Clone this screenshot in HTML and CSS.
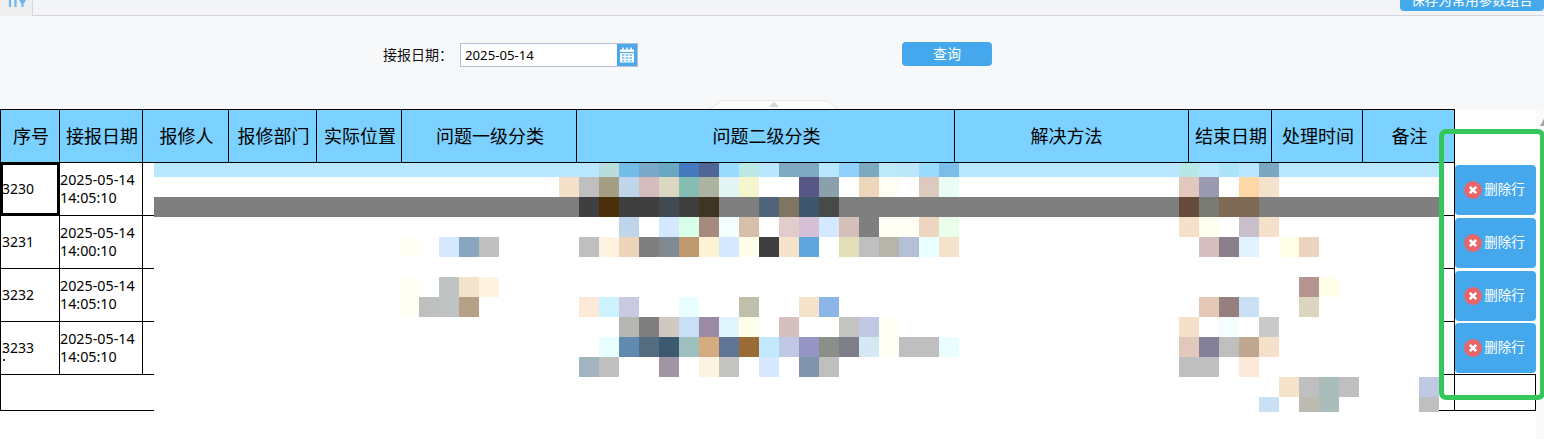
FILE: index.html
```html
<!DOCTYPE html>
<html lang="zh-CN">
<head>
<meta charset="utf-8">
<title>报修记录</title>
<link rel="stylesheet" href="styles.css">
</head>
<body>
<header class="topbar">
  <div class="tab">
    <svg class="tab-icon" width="20" height="8" viewBox="0 0 20 8"><path d="M2 0v7M7.500 0v7M14.500 3v4" stroke="#6db8ef" stroke-width="2.200" fill="none"/><path d="M11 0h7l-2 3.500h-3z" fill="#6db8ef"/></svg>
  </div>
  <div class="tab-rest"><button class="btn save-btn">保存为常用参数组合</button></div>
</header>

<section class="filter">
  <label class="filter-label">接报日期：</label>
  <div class="date-field">
    <input class="date-input" value="2025-05-14" readonly>
    <span class="date-icon">
      <svg width="18" height="18" viewBox="0 0 18 18"><path d="M2 3.500h14v13H2z" fill="#fff" opacity=".95"/><path d="M2 6.500h14" stroke="#4da8ea"/><path d="M5 1.500v3M9 1.500v3M13 1.500v3" stroke="#fff" stroke-width="1.500"/><path d="M4 8h2.500v2H4zM7.800 8h2.500v2H7.800zM11.500 8H14v2h-2.500zM4 11h2.500v2H4zM7.800 11h2.500v2H7.800zM11.500 11H14v2h-2.500zM4 14h2.500v1.500H4zM7.800 14h2.500v1.500H7.800zM11.500 14H14v1.500h-2.500z" fill="#8fc8f0"/></svg>
    </span>
  </div>
  <button class="btn query-btn">查询</button>
  <svg class="collapse-handle" width="128" height="9" viewBox="0 0 128 9"><path d="M0 9 L12 .5 H116 L128 9" fill="#fdfdfd" stroke="#e6e6e6"/><path d="M59 7 L64 1.500 L69 7z" fill="#d9d9d9"/></svg>
</section>

<main class="content">
  <div class="table-area">
    <table class="grid">
      <colgroup>
        <col class="c1"><col class="c2"><col class="c3"><col class="c4"><col class="c5"><col class="c6"><col class="c7"><col class="c8"><col class="c9"><col class="c10"><col class="c11"><col class="c12"><col class="c13">
      </colgroup>
      <thead>
        <tr>
          <th>序号</th><th>接报日期</th><th>报修人</th><th>报修部门</th><th>实际位置</th><th>问题一级分类</th><th>问题二级分类</th><th class="method">解决方法</th><th>结束日期</th><th>处理时间</th><th>备注</th><th></th><th class="action-head"></th>
        </tr>
      </thead>
      <tbody>
        <tr>
          <td class="seq selected">3230</td><td class="date">2025-05-14<br>14:05:10</td><td></td><td></td><td></td><td></td><td></td><td></td><td></td><td></td><td></td><td></td>
          <td class="action"><button class="btn del-btn"><svg class="del-icon" width="18" height="18" viewBox="0 0 18 18"><circle cx="9" cy="9" r="9" fill="#e6666c"/><path d="M5.800 5.800l6.400 6.400M12.200 5.800l-6.400 6.400" stroke="#fff" stroke-width="2.600"/></svg>删除行</button></td>
        </tr>
        <tr>
          <td class="seq">3231</td><td class="date">2025-05-14<br>14:00:10</td><td></td><td></td><td></td><td></td><td></td><td></td><td></td><td></td><td></td><td></td>
          <td class="action"><button class="btn del-btn"><svg class="del-icon" width="18" height="18" viewBox="0 0 18 18"><circle cx="9" cy="9" r="9" fill="#e6666c"/><path d="M5.800 5.800l6.400 6.400M12.200 5.800l-6.400 6.400" stroke="#fff" stroke-width="2.600"/></svg>删除行</button></td>
        </tr>
        <tr>
          <td class="seq">3232</td><td class="date">2025-05-14<br>14:05:10</td><td></td><td></td><td></td><td></td><td></td><td></td><td></td><td></td><td></td><td></td>
          <td class="action"><button class="btn del-btn"><svg class="del-icon" width="18" height="18" viewBox="0 0 18 18"><circle cx="9" cy="9" r="9" fill="#e6666c"/><path d="M5.800 5.800l6.400 6.400M12.200 5.800l-6.400 6.400" stroke="#fff" stroke-width="2.600"/></svg>删除行</button></td>
        </tr>
        <tr>
          <td class="seq marked">3233</td><td class="date">2025-05-14<br>14:05:10</td><td></td><td></td><td></td><td></td><td></td><td></td><td></td><td></td><td></td><td></td>
          <td class="action"><button class="btn del-btn"><svg class="del-icon" width="18" height="18" viewBox="0 0 18 18"><circle cx="9" cy="9" r="9" fill="#e6666c"/><path d="M5.800 5.800l6.400 6.400M12.200 5.800l-6.400 6.400" stroke="#fff" stroke-width="2.600"/></svg>删除行</button></td>
        </tr>
        <tr class="blank-row">
          <td colspan="12"></td><td class="blank-end"></td>
        </tr>
      </tbody>
    </table>

    <svg class="mosaic" width="1285" height="249" viewBox="154 163 1285 249" shape-rendering="crispEdges">
      <rect class="fill" x="154" y="163" fill="#fff"/>
      <rect class="band band-top" x="154" y="163" fill="#b9e7ff"/>
      <rect class="band" x="154" y="197" fill="#7f7f7f"/>
      <g class="short">
        <rect x="599" y="163" fill="#b8dcdc"/><rect x="619" y="163" fill="#73bce8"/><rect x="639" y="163" fill="#7ba7c9"/><rect x="659" y="163" fill="#68a8c0"/><rect x="679" y="163" fill="#4479bf"/><rect x="699" y="163" fill="#4f6593"/><rect x="719" y="163" fill="#98dbfd"/><rect x="739" y="163" fill="#bbe8e3"/><rect x="779" y="163" fill="#7fa9c0"/><rect x="799" y="163" fill="#7fa9c0"/><rect x="839" y="163" fill="#90d0fc"/><rect x="859" y="163" fill="#7ca8c0"/><rect x="879" y="163" fill="#bce8f8"/><rect x="899" y="163" fill="#bce6fa"/><rect x="919" y="163" fill="#98dbfd"/><rect x="939" y="163" fill="#7bbce8"/><rect x="1179" y="163" fill="#b9e6e6"/><rect x="1199" y="163" fill="#bce8ff"/><rect x="1219" y="163" fill="#abe3fb"/><rect x="1259" y="163" fill="#7ba8c0"/>
      </g>
      <g>
        <rect x="559" y="177" fill="#f5e1ca"/><rect x="579" y="177" fill="#bfbfbf"/><rect x="599" y="177" fill="#a59e85"/><rect x="619" y="177" fill="#bfd5ea"/><rect x="639" y="177" fill="#d4bcbc"/><rect x="659" y="177" fill="#dcd7c0"/><rect x="679" y="177" fill="#85bdb3"/><rect x="699" y="177" fill="#adb3a0"/><rect x="719" y="177" fill="#e3f5f3"/><rect x="739" y="177" fill="#f5f6cf"/><rect x="799" y="177" fill="#575785"/><rect x="819" y="177" fill="#8aa0ac"/><rect x="859" y="177" fill="#edd6b9"/><rect x="879" y="177" fill="#fffef5"/><rect x="919" y="177" fill="#ddc9be"/><rect x="939" y="177" fill="#eafdf5"/><rect x="1179" y="177" fill="#e2c8bc"/><rect x="1199" y="177" fill="#9a9ab2"/><rect x="1239" y="177" fill="#ffd6a5"/><rect x="1259" y="177" fill="#f5e2cc"/>
      </g>
      <g>
        <rect x="579" y="197" fill="#3f3f3f"/><rect x="599" y="197" fill="#4d2f0b"/><rect x="619" y="197" fill="#3f3f3f"/><rect x="639" y="197" fill="#3f3f3f"/><rect x="659" y="197" fill="#3f4a52"/><rect x="679" y="197" fill="#3f3f3f"/><rect x="699" y="197" fill="#3f3522"/><rect x="759" y="197" fill="#4f6579"/><rect x="779" y="197" fill="#7f7560"/><rect x="799" y="197" fill="#3f556b"/><rect x="819" y="197" fill="#474a48"/><rect x="1179" y="197" fill="#664b3d"/><rect x="1199" y="197" fill="#7a7b75"/><rect x="1219" y="197" fill="#7f6a55"/><rect x="1239" y="197" fill="#7f6a55"/>
      </g>
      <g>
        <rect x="619" y="217" fill="#bfd5ea"/><rect x="659" y="217" fill="#d4e9ff"/><rect x="679" y="217" fill="#d9ffe9"/><rect x="699" y="217" fill="#a58a7d"/><rect x="719" y="217" fill="#f3feff"/><rect x="739" y="217" fill="#d7bfac"/><rect x="779" y="217" fill="#e1cbcb"/><rect x="799" y="217" fill="#d5c0d5"/><rect x="819" y="217" fill="#d4e9ff"/><rect x="839" y="217" fill="#d5bfb9"/><rect x="859" y="217" fill="#7f7f7f"/><rect x="879" y="217" fill="#fffff5"/><rect x="899" y="217" fill="#fffff5"/><rect x="919" y="217" fill="#edd5bf"/><rect x="939" y="217" fill="#e9ffe9"/><rect x="1179" y="217" fill="#f5e1ca"/><rect x="1199" y="217" fill="#fffff0"/><rect x="1239" y="217" fill="#c9bfca"/><rect x="1259" y="217" fill="#f5e1ca"/>
      </g>
      <g>
        <rect x="399" y="237" fill="#fffff3"/><rect x="439" y="237" fill="#d4e9ff"/><rect x="459" y="237" fill="#8aa5bf"/><rect x="479" y="237" fill="#bfbfbf"/><rect x="579" y="237" fill="#bfbfbf"/><rect x="599" y="237" fill="#fdf3e0"/><rect x="619" y="237" fill="#ecd5b8"/><rect x="639" y="237" fill="#7f7f7f"/><rect x="659" y="237" fill="#7f8a92"/><rect x="679" y="237" fill="#bf9a70"/><rect x="699" y="237" fill="#fff3d5"/><rect x="719" y="237" fill="#d4e9ff"/><rect x="739" y="237" fill="#ffffe9"/><rect x="759" y="237" fill="#3f3f3f"/><rect x="779" y="237" fill="#f5e2cb"/><rect x="799" y="237" fill="#60a5dc"/><rect x="839" y="237" fill="#e3e0b8"/><rect x="859" y="237" fill="#bfbfbf"/><rect x="879" y="237" fill="#b5b5aa"/><rect x="899" y="237" fill="#b5bfd5"/><rect x="919" y="237" fill="#eaffff"/><rect x="939" y="237" fill="#f5e2cb"/><rect x="1199" y="237" fill="#d5bfbf"/><rect x="1219" y="237" fill="#8a7f8a"/><rect x="1239" y="237" fill="#e0f3ff"/><rect x="1279" y="237" fill="#ffffe9"/><rect x="1299" y="237" fill="#ecd5bf"/>
      </g>
      <g>
        <rect x="399" y="277" fill="#fffff3"/><rect x="439" y="277" fill="#bfc3c3"/><rect x="459" y="277" fill="#f5e2cb"/><rect x="479" y="277" fill="#fdf3e0"/><rect x="1299" y="277" fill="#b59590"/><rect x="1319" y="277" fill="#ffffe9"/>
      </g>
      <g>
        <rect x="399" y="297" fill="#fffff3"/><rect x="419" y="297" fill="#bfbfbf"/><rect x="439" y="297" fill="#bfc3c3"/><rect x="459" y="297" fill="#b59f85"/><rect x="579" y="297" fill="#fde9d7"/><rect x="599" y="297" fill="#cdf3ff"/><rect x="619" y="297" fill="#c9c9e3"/><rect x="679" y="297" fill="#e9ffff"/><rect x="739" y="297" fill="#bfbfaa"/><rect x="799" y="297" fill="#f5e2cb"/><rect x="819" y="297" fill="#8ab5e6"/><rect x="1199" y="297" fill="#e2c8b5"/><rect x="1219" y="297" fill="#957f7f"/><rect x="1239" y="297" fill="#c9e0f5"/><rect x="1299" y="297" fill="#dcd5bf"/>
      </g>
      <g>
        <rect x="619" y="317" fill="#b5b7b3"/><rect x="639" y="317" fill="#7f7f7f"/><rect x="659" y="317" fill="#cfc9bf"/><rect x="679" y="317" fill="#c9dff5"/><rect x="699" y="317" fill="#9a8aa5"/><rect x="719" y="317" fill="#e0f5ff"/><rect x="739" y="317" fill="#ffffe9"/><rect x="779" y="317" fill="#d5bfbf"/><rect x="839" y="317" fill="#c3c3bf"/><rect x="859" y="317" fill="#bfc9e3"/><rect x="879" y="317" fill="#fffff5"/><rect x="1179" y="317" fill="#f5e1ca"/><rect x="1219" y="317" fill="#f3ffff"/><rect x="1259" y="317" fill="#c9c9c9"/>
      </g>
      <g>
        <rect x="599" y="337" fill="#e9ffff"/><rect x="619" y="337" fill="#608aaf"/><rect x="639" y="337" fill="#556b80"/><rect x="659" y="337" fill="#3b5a70"/><rect x="679" y="337" fill="#a0bfbf"/><rect x="699" y="337" fill="#d5ab80"/><rect x="719" y="337" fill="#607595"/><rect x="739" y="337" fill="#9a6b35"/><rect x="759" y="337" fill="#c3e9ff"/><rect x="779" y="337" fill="#bfc9e3"/><rect x="799" y="337" fill="#9595c3"/><rect x="819" y="337" fill="#8a8f8a"/><rect x="839" y="337" fill="#7f7f8a"/><rect x="859" y="337" fill="#d5e9f5"/><rect x="879" y="337" fill="#fffff5"/><rect x="899" y="337" fill="#bfbfbf"/><rect x="919" y="337" fill="#bfbfbf"/><rect x="939" y="337" fill="#e9ffff"/><rect x="1179" y="337" fill="#e2c8bc"/><rect x="1199" y="337" fill="#85809a"/><rect x="1219" y="337" fill="#bfbfbf"/><rect x="1239" y="337" fill="#bfa88f"/><rect x="1259" y="337" fill="#f5e1ca"/>
      </g>
      <g>
        <rect x="579" y="357" fill="#a0b5bf"/><rect x="599" y="357" fill="#bfbfbf"/><rect x="659" y="357" fill="#a095a5"/><rect x="699" y="357" fill="#fdf3e0"/><rect x="719" y="357" fill="#c3c3bf"/><rect x="759" y="357" fill="#d4e9ff"/><rect x="799" y="357" fill="#8095ab"/><rect x="819" y="357" fill="#bfbfbf"/><rect x="1179" y="357" fill="#bfbfbf"/><rect x="1199" y="357" fill="#bfbfbf"/><rect x="1239" y="357" fill="#fde9d7"/>
      </g>
      <g>
        <rect x="1279" y="377" fill="#f5e2cb"/><rect x="1299" y="377" fill="#bfbfbf"/><rect x="1319" y="377" fill="#a9bdbb"/><rect x="1339" y="377" fill="#bfbfbf"/><rect x="1419" y="377" fill="#bfc9e3"/>
      </g>
      <g class="last">
        <rect x="1259" y="397" fill="#c9e0f5"/><rect x="1299" y="397" fill="#bdbbb0"/><rect x="1319" y="397" fill="#a9bdbb"/><rect x="1419" y="397" fill="#bfbfbf"/>
      </g>
    </svg>
  </div>
  <aside class="scrollbar">
    <svg width="8" height="8" viewBox="0 0 8 8"><path d="M8 0.500V8H4z" fill="#a8a8a8"/></svg>
  </aside>
  <div class="highlight"></div>
</main>
</body>
</html>
```
FILE: styles.css
```css
* { box-sizing: border-box; }

html, body {
  margin: 0;
  height: 100%;
  overflow: hidden;
}

body {
  background: #f7f8fa;
  color: #000;
  font-family: "Noto Sans", "Noto Sans CJK SC", sans-serif;
  font-size: 14px;
}

.btn {
  border: 0;
  border-radius: 4px;
  background: #46a8ec;
  color: #fff;
  font: inherit;
  padding: 0;
}

.topbar {
  display: flex;
  height: 16px;
  overflow: hidden;
}

.tab {
  width: 33px;
  background: #efefef;
  position: relative;
  overflow: hidden;
  padding-left: 8px;
  border-right: 1px solid #d8d8d8;
}

.tab-icon { display: block; }

.tab-rest {
  flex: 1;
  display: flex;
  justify-content: flex-end;
  align-items: flex-end;
  background: #f3f4f8;
  border-bottom: 1px solid #d5d5da;
  padding-bottom: 4px;
}

.save-btn {
  flex: none;
  width: 144px;
  height: 22px;
  font-size: 13.500px;
  line-height: 18px;
}

.filter {
  position: relative;
  height: 93px;
  display: flex;
  align-items: flex-start;
  padding: 26px 0 0 383px;
}

.filter-label {
  width: 77px;
  height: 26px;
  line-height: 25px;
  font-family: "Noto Sans CJK TC", "Noto Sans CJK SC", sans-serif;
  font-size: 14px;
  color: #111;
}

.date-field {
  display: flex;
  width: 178px;
  height: 24px;
  margin-top: 1px;
  border: 1px solid #b5bdd5;
  background: #fff;
}

.date-input {
  flex: 1;
  min-width: 0;
  border: 0;
  outline: 0;
  padding: 0 0 0 4px;
  background: #fff;
  color: #000;
  font: inherit;
  font-size: 13.200px;
}

.date-icon {
  width: 20px;
  background: #4da8ea;
  display: flex;
  align-items: center;
  justify-content: center;
}

.query-btn {
  width: 90px;
  height: 24px;
  margin-left: 264px;
  font-size: 14px;
  line-height: 22px;
}

.collapse-handle {
  position: absolute;
  left: 710px;
  bottom: 0;
}

.content {
  position: relative;
  display: flex;
  height: 330px;
  background: #fefefe;
}

.table-area {
  position: relative;
  width: 1536px;
  flex: none;
  background: #fff;
}

.grid {
  table-layout: fixed;
  width: 1535px;
  border-collapse: collapse;
}

.c1 { width: 59px; }
.c2 { width: 83px; }
.c3 { width: 86px; }
.c4 { width: 88px; }
.c5 { width: 85px; }
.c6 { width: 175px; }
.c7 { width: 378px; }
.c8 { width: 234px; }
.c9 { width: 83px; }
.c10 { width: 91px; }
.c11 { width: 92px; }
.c12 { width: 0; }
.c13 { width: 81px; }

.grid th,
.grid td {
  border: 1px solid #000;
  padding: 0;
  overflow: hidden;
  white-space: nowrap;
}

.grid th {
  height: 53px;
  padding: 0 0 2px 2px;
  background: #7bd1ff;
  font-size: 18px;
  font-weight: 400;
  text-align: center;
}

.grid th.method { padding-right: 12px; }

.grid th.action-head {
  background: #fff;
  border: 0;
  border-left: 1px solid #000;
}

.grid td { height: 53px; }

.grid td.seq {
  padding: 0 0 2px 1px;
  position: relative;
}

.grid td.selected { box-shadow: inset 0 0 0 2px #000; }

.grid td.marked::after {
  content: "";
  position: absolute;
  left: 2px;
  top: 37px;
  width: 2px;
  height: 2px;
  background: #333;
  box-shadow: 0 -8px 0 #333;
}

.grid td.date {
  font-size: 14.300px;
  line-height: 18px;
}

.grid td.action {
  border-right: 0;
  border-top: 0;
  border-bottom: 0;
  padding: 0 0 1px;
  overflow: visible;
  vertical-align: bottom;
}

.del-btn {
  display: flex;
  align-items: center;
  justify-content: center;
  gap: 2px;
  width: 81px;
  height: 50px;
  padding: 0 2px 4px 0;
  font-size: 13.500px;
  color: #fff;
}

.del-icon {
  flex: none;
  margin-top: 4px;
}

.blank-row td { height: 36px; }

.grid td.blank-end { border: 1px solid #000; }

.mosaic {
  position: absolute;
  left: 154px;
  top: 54px;
  display: block;
}

.mosaic rect { width: 20px; height: 20px; }
.mosaic .fill { width: 1285px; height: 249px; }
.mosaic .band { width: 1285px; }
.mosaic .band-top { height: 14px; }
.mosaic .short rect { height: 14px; }
.mosaic .last rect { height: 15px; }

.scrollbar {
  flex: 1;
  background: #fafafa;
  padding-top: 9px;
  overflow: hidden;
}

.scrollbar svg { display: block; }

.highlight {
  position: absolute;
  left: 1439px;
  top: 20px;
  width: 106px;
  height: 271px;
  border: 5px solid #36c75c;
  border-radius: 7px;
}
```
